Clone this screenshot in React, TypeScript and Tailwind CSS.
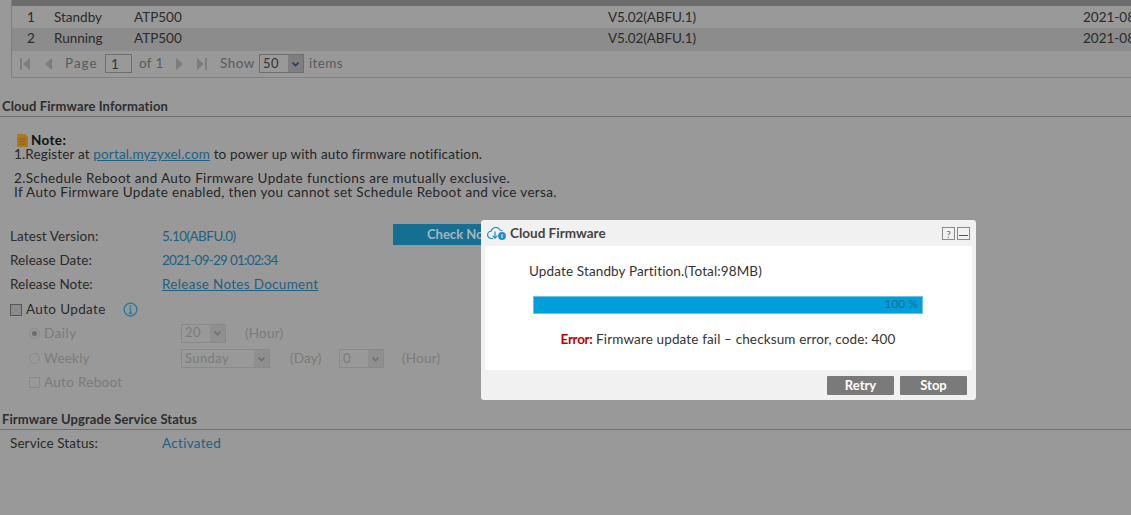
import React from "react";

const F = "font-['Lato','Liberation_Sans',sans-serif]";

function Sel({ v, w, dim }: { v: string; w: string; dim?: boolean }) {
  return (
    <div className={`${w} h-[19px] flex items-center justify-between border ${dim ? "border-[#8a8a8a] text-[#7b7b7b]" : "border-[#6e6e6e] text-[#333]"}`}>
      <span className="pl-[3px] text-[13px] tracking-[0.4px]">{v}</span>
      <span className={`w-[15px] h-full flex items-center justify-center ${dim ? "bg-[#8f8f8f]" : "bg-[#7f7f7f]"}`}>
        <svg width="9" height="6" viewBox="0 0 9 6"><path d="M1.5 1.5 4.5 4.5 7.5 1.5" fill="none" stroke={dim ? "#6f6f6f" : "#24366b"} strokeWidth="1.6" /></svg>
      </span>
    </div>
  );
}

function Pg({ d }: { d: string }) {
  return <svg width="12" height="14" viewBox="0 0 12 14"><path d={d} fill="#7d7d7d" /></svg>;
}

function Row({ l, children }: { l: string; children: React.ReactNode }) {
  return (
    <div className="h-[24px] pb-[2px] flex items-center pl-[10px] text-[13.5px] tracking-[0.1px] text-[#2a2a2a] whitespace-nowrap">
      <span className="w-[152px]">{l}</span>
      {children}
    </div>
  );
}

function Title({ t }: { t: string }) {
  return (
    <div className="h-[22px] pt-[2px] flex items-center pl-[2px] border-b border-[#6f6f6f] text-[13px] font-bold text-[#2e2e2e] tracking-[0.1px]">{t}</div>
  );
}

function DataRow({ n, s, bg, h }: { n: string; s: string; bg: string; h: string }) {
  return (
    <div className={`${h} ${bg} flex items-center text-[13.5px] text-[#2a2a2a] whitespace-nowrap`}>
      <span className="w-[42px] shrink-0 pl-[15px]">{n}</span>
      <span className="w-[80px] shrink-0">{s}</span>
      <span className="w-[474px] shrink-0">ATP500</span>
      <span className="w-[475px] shrink-0 tracking-[-0.1px]">V5.02(ABFU.1)</span>
      <span className="shrink-0">2021-08-</span>
    </div>
  );
}

export default function App() {
  return (
    <div className={`relative w-[1131px] h-[515px] overflow-hidden bg-[#999999] ${F}`}>
      {/* table */}
      <div className="ml-[11px] border-l border-b border-[#808080] h-[78px] flex flex-col">
        <div className="h-[6px] bg-[#6d6d6d]" />
        <DataRow n="1" s="Standby" bg="bg-[#999999]" h="h-[22px]" />
        <DataRow n="2" s="Running" bg="bg-[#8c8c8c] pb-[2px]" h="h-[23px]" />
        <div className="flex-1 flex items-center pl-[7px] pb-[1px] text-[13.5px] tracking-[0.35px] text-[#5a5a5a] whitespace-nowrap">
          <Pg d="M1 1h2v12H1zM11 1v12L4 7z" />
          <span className="w-[11px]" />
          <Pg d="M10 1v12L3 7z" />
          <span className="ml-[11px] w-[33px] tracking-[1px]">Page</span>
          <span className="ml-[7px] w-[27px] h-[19px] border border-[#6e6e6e] pl-[5px] leading-[18px] text-[#333]">1</span>
          <span className="ml-[7px] w-[24px]">of 1</span>
          <span className="w-[11px]" />
          <Pg d="M2 1v12l7-6z" />
          <span className="w-[10px]" />
          <Pg d="M1 1v12l7-6zM9 1h2v12H9z" />
          <span className="ml-[12px] w-[34px] tracking-[0.5px]">Show</span>
          <span className="ml-[5px]"><Sel v="50" w="w-[45px]" /></span>
          <span className="ml-[5px]">items</span>
        </div>
      </div>

      {/* cloud firmware */}
      <div className="mt-[17px]"><Title t="Cloud Firmware Information" /></div>
      <div className="pl-[14px] pt-[17px] text-[13.5px] tracking-[0.35px] text-[#262626] leading-[14px]">
        <div className="flex items-center gap-[3px] pl-[3px] font-bold text-[#111] h-[13px]">
          <svg width="11" height="13" viewBox="0 0 11 13"><path d="M0 0h8l3 3v10H0z" fill="#a9781f" /><path d="M2 5h7M2 7.5h7M2 10h7" stroke="#8a6118" /></svg>
          <span className="leading-[13px]">Note:</span>
        </div>
        <div className="tracking-[0.15px]">1.Register at <span className="text-[#1f5f80] underline">portal.myzyxel.com</span> to power up with auto firmware notification.</div>
        <div className="mt-[10px]">2.Schedule Reboot and Auto Firmware Update functions are mutually exclusive.</div>
        <div>If Auto Firmware Update enabled, then you cannot set Schedule Reboot and vice versa.</div>
      </div>

      <div className="mt-[26px] relative">
        <Row l="Latest Version:"><span className="text-[#1f5f80] tracking-[-0.55px]">5.10(ABFU.0)</span></Row>
        <div className="absolute left-[393px] top-[-1px] w-[200px] h-[21px] bg-[#146f93] text-[13px] font-bold text-[#a9b6bc] flex items-center pl-[34px]">Check Now</div>
        <Row l="Release Date:"><span className="text-[#1f5f80] tracking-[-0.75px]">2021-09-29 01:02:34</span></Row>
        <Row l="Release Note:"><span className="text-[#1f5f80] underline tracking-[0.3px]">Release Notes Document</span></Row>
        <div className="h-[25px] flex items-center pl-[10px] text-[13.5px] tracking-[0.35px] text-[#2a2a2a] whitespace-nowrap">
          <span className="w-[12px] h-[12px] border border-[#555] bg-[#8c8c8c]" />
          <span className="ml-[4px] w-[79px]">Auto Update</span>
          <svg className="ml-[18px]" width="15" height="15" viewBox="0 0 14 14"><circle cx="7" cy="7" r="6" fill="none" stroke="#2a7a9c" strokeWidth="1.3" /><path d="M7 6v4.5M5.5 10.5h3M5.8 6H7" stroke="#2a7a9c" strokeWidth="1.2" fill="none" /><circle cx="7" cy="3.9" r="0.9" fill="#2a7a9c" /></svg>
        </div>
        <div className="h-[24px] pb-[2px] flex items-center pl-[29px] text-[13.5px] tracking-[0.2px] text-[#7b7b7b]">
          <span className="w-[11px] h-[11px] rounded-full border border-[#8a8a8a] flex items-center justify-center"><span className="w-[5px] h-[5px] rounded-full bg-[#6c6c6c]" /></span>
          <span className="ml-[4px] w-[137px] tracking-[0.5px]">Daily</span>
          <Sel v="20" w="w-[45px]" dim />
          <span className="ml-[19px]">(Hour)</span>
        </div>
        <div className="h-[25px] flex items-center pl-[29px] text-[13.5px] tracking-[0.2px] text-[#7b7b7b]">
          <span className="w-[11px] h-[11px] rounded-full border border-[#8a8a8a]" />
          <span className="ml-[4px] w-[137px]">Weekly</span>
          <Sel v="Sunday" w="w-[89px]" dim />
          <span className="ml-[20px] w-[32px]">(Day)</span>
          <span className="ml-[17px]"><Sel v="0" w="w-[45px]" dim /></span>
          <span className="ml-[18px]">(Hour)</span>
        </div>
        <div className="h-[24px] pb-[2px] flex items-center pl-[29px] text-[13.5px] tracking-[0.3px] text-[#7b7b7b]">
          <span className="w-[11px] h-[11px] border border-[#8a8a8a]" />
          <span className="ml-[4px]">Auto Reboot</span>
        </div>
      </div>

      <div className="mt-[13px]"><Title t="Firmware Upgrade Service Status" /></div>
      <div className="mt-[2px]">
        <Row l="Service Status:"><span className="text-[#1f5f80] tracking-[0.3px]">Activated</span></Row>
      </div>

      {/* dialog */}
      <div className="absolute left-[481px] top-[220px] w-[495px] h-[180px] bg-[#f1f1f1] rounded-[3px] flex flex-col">
        <div className="h-[26px] flex items-center pl-[6px] pr-[5px] pt-[1px]">
          <svg width="20" height="15" viewBox="0 0 20 15" fill="none" stroke="#1d8fc7" strokeWidth="1.2">
            <path d="M6 12.5H4.5a3.7 3.7 0 0 1-.4-7.4A4.8 4.8 0 0 1 13 4a3.8 3.8 0 0 1 2.4 1.2" />
            <path d="M8 5.5v6.5M5.6 9.6 8 12.2l2.4-2.6" />
            <circle cx="15" cy="10" r="3.9" fill="#1d8fc7" stroke="none" />
            <path d="M15 8.2v3.6" stroke="#fff" strokeWidth="1" />
          </svg>
          <span className="ml-[3px] text-[13.5px] font-bold text-[#444]">Cloud Firmware</span>
          <span className="ml-auto w-[13px] h-[13px] border border-[#8a8a8a] text-[10px] leading-[12px] text-center text-[#666]">?</span>
          <span className="ml-[2px] mr-[1px] w-[13px] h-[13px] border border-[#8a8a8a] flex items-end justify-center pb-[3px]"><span className="w-[9px] h-[1.5px] bg-[#555]" /></span>
        </div>
        <div className="mx-[4px] h-[124px] bg-white flex flex-col text-[13.5px] text-[#333]">
          <div className="ml-[44px] mt-[15px] h-[20px] flex items-center tracking-[0.13px]">Update Standby Partition.(Total:98MB)</div>
          <div className="ml-[48px] mt-[15px] w-[390px] h-[18px] bg-[#009fdc] border border-[#6cc3e6] flex items-center justify-end pr-[4px] pb-[2px] text-[12px] text-[#1b6f94]">100 %</div>
          <div className="mt-[15px] h-[20px] flex items-center justify-center pr-[1px] tracking-[0.13px]"><span className="font-bold text-[#c00000] tracking-[-0.3px]">Error:</span>&nbsp;Firmware update fail – checksum error, code: 400</div>
        </div>
        <div className="flex-1 flex items-center justify-end gap-[6px] pr-[9px] pt-[1px]">
          <button className="w-[67px] h-[19px] bg-[#7a7a7a] rounded-[1px] text-[13px] font-bold text-white">Retry</button>
          <button className="w-[67px] h-[19px] bg-[#7a7a7a] rounded-[1px] text-[13px] font-bold text-white">Stop</button>
        </div>
      </div>
    </div>
  );
}
